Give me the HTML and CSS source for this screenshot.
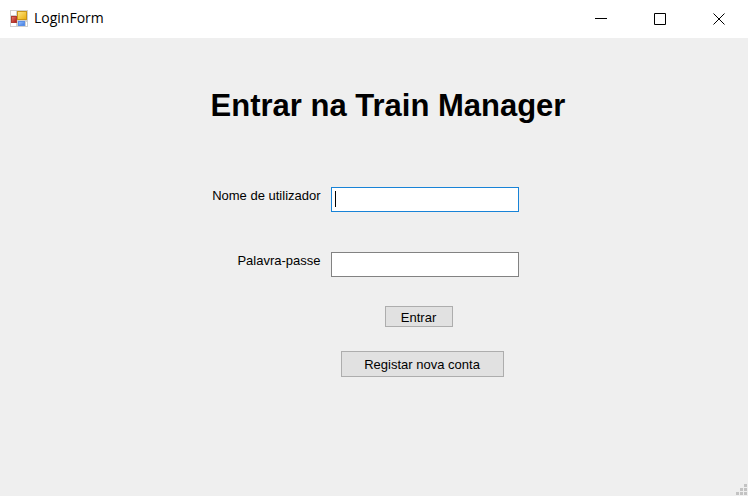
FILE: index.html
```html
<!DOCTYPE html>
<html lang="pt">
<head>
<meta charset="utf-8">
<title>LoginForm</title>
<link rel="stylesheet" href="styles.css">
</head>
<body>
<header class="titlebar">
  <svg class="app-icon" width="18" height="17" viewBox="0 0 18 17" aria-hidden="true">
    <defs>
      <linearGradient id="gold" x1="0" y1="0" x2="1" y2="1"><stop offset="0" stop-color="#ffe98a"/><stop offset="1" stop-color="#e9ac08"/></linearGradient>
      <linearGradient id="red" x1="0" y1="0" x2="1" y2="1"><stop offset="0" stop-color="#e88070"/><stop offset="1" stop-color="#a81410"/></linearGradient>
      <linearGradient id="blue" x1="0" y1="0" x2="1" y2="1"><stop offset="0" stop-color="#9cc4ff"/><stop offset="1" stop-color="#3c78e0"/></linearGradient>
    </defs>
    <rect width="18" height="17" fill="#d0d0d0"/>
    <path d="M1 1h5v4H1zM1 13h5v3H1zM16 12h1v4h-1z" fill="#fff"/>
    <rect x="1.5" y="6.5" width="5" height="6" fill="url(#red)" stroke="#b03a30"/>
    <rect x="7.5" y="1.5" width="9" height="8" fill="url(#gold)" stroke="#c99518"/>
    <rect x="8.5" y="11.5" width="6" height="4" fill="url(#blue)" stroke="#5b8fe5"/>
  </svg>
  <span class="caption">LoginForm</span>
  <div class="window-controls">
    <button type="button" aria-label="Minimizar"><svg width="12" height="12" viewBox="0 0 12 12"><path d="M0 5.5h12"/></svg></button>
    <button type="button" aria-label="Maximizar"><svg width="12" height="12" viewBox="0 0 12 12"><path d="M.5.5h11v11H.5z"/></svg></button>
    <button type="button" aria-label="Fechar"><svg width="12" height="12" viewBox="0 0 12 12"><path d="M.5.5l11 11M11.5.5l-11 11"/></svg></button>
  </div>
</header>
<main class="content">
  <form class="login">
    <h1>Entrar na Train Manager</h1>
    <div class="row">
      <label for="user">Nome de utilizador</label>
      <div class="field focused"><input id="user" type="text"></div>
    </div>
    <div class="row">
      <label for="pass">Palavra-passe</label>
      <div class="field"><input id="pass" type="password"></div>
    </div>
    <div class="actions">
      <button class="enter" type="button">Entrar</button>
      <button class="register" type="button">Registar nova conta</button>
    </div>
  </form>
</main>
<svg class="grip" width="11" height="11" viewBox="0 0 11 11" aria-hidden="true"><path d="M8 0h3v3H8zM4 4h3v3H4zM8 4h3v3H8zM0 8h3v3H0zM4 8h3v3H4zM8 8h3v3H8z"/></svg>
</body>
</html>
```

FILE: styles.css
```css
* { box-sizing: border-box; }

body {
  margin: 0;
  min-height: 100vh;
  display: flex;
  flex-direction: column;
  background: #efefef;
  color: #000;
  font: 13px/16px "Liberation Sans", Arial, sans-serif;
}

.titlebar {
  display: flex;
  align-items: center;
  height: 38px;
  padding: 0 0 2px 10px;
  background: #fff;
}

.app-icon { margin-right: 6px; }

.caption { font: 14px/20px "Open Sans", "Noto Sans", sans-serif; }

.window-controls {
  display: flex;
  align-self: stretch;
  margin-left: auto;
}

.window-controls button {
  display: flex;
  align-items: center;
  justify-content: center;
  width: 59px;
  padding: 2px 0 0;
  border: 0;
  background: none;
}

.window-controls path {
  fill: none;
  stroke: #000;
}

.content {
  flex: 1;
  display: flex;
  justify-content: center;
  padding: 48px 0 0 28px;
}

.login {
  display: flex;
  flex-direction: column;
}

h1 {
  margin: 0 0 61px;
  font-size: 31px;
  line-height: 40px;
}

.row {
  display: grid;
  grid-template-columns: 110px 188px;
  column-gap: 10px;
  margin-bottom: 40px;
}

label {
  padding-top: 1px;
  text-align: right;
  white-space: nowrap;
}

.field {
  position: relative;
  height: 25px;
  border: 1px solid #828282;
  background: #fff;
}

.field.focused { border-color: #1883d7; }

input {
  display: block;
  width: 100%;
  height: 100%;
  padding: 0 4px;
  border: 0;
  background: none;
  font: inherit;
  outline: 0;
}

.focused::after {
  content: "";
  position: absolute;
  left: 3px;
  top: 3px;
  width: 1px;
  height: 16px;
  background: #000;
}

.actions {
  display: flex;
  flex-direction: column;
  gap: 24px;
  width: 163px;
  margin: -11px 0 0 130px;
}

.actions button {
  padding: 2px 0 0;
  border: 1px solid #adadad;
  background: #e1e1e1;
  color: #000;
  font: inherit;
}

.actions .enter {
  width: 68px;
  height: 21px;
  margin-left: 44px;
}

.actions .register {
  height: 26px;
}

.grip {
  position: fixed;
  right: 1px;
  bottom: 1px;
  fill: #c3c3c3;
}
```
